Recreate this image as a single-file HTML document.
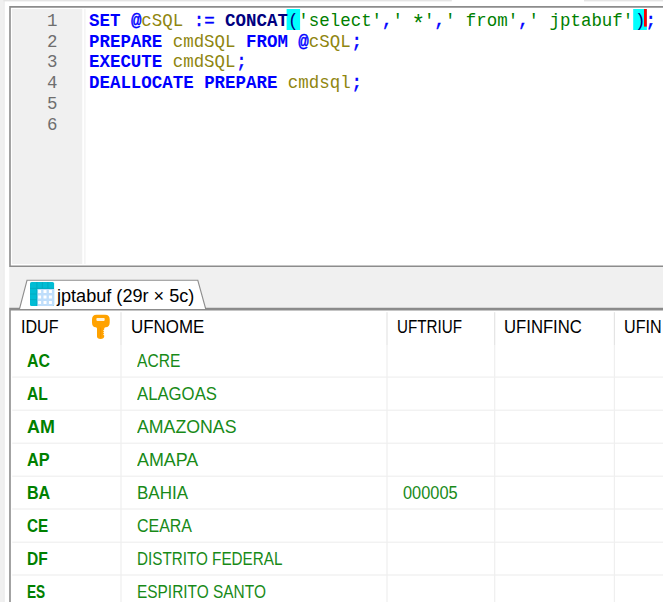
<!DOCTYPE html>
<html>
<head>
<meta charset="utf-8">
<style>
html,body{margin:0;padding:0;}
body{width:663px;height:602px;overflow:hidden;background:#fff;position:relative;font-family:"Liberation Sans",sans-serif;}
.abs{position:absolute;}
.ln{position:absolute;left:11px;width:46.5px;text-align:right;font-family:"Liberation Mono",monospace;font-size:17.45px;line-height:21px;height:21px;color:#6e6e6e;white-space:pre;transform:scaleY(1.08);transform-origin:0 15.16px;}
.cl{position:absolute;left:89px;font-family:"Liberation Mono",monospace;font-size:17.45px;line-height:21px;height:21px;white-space:pre;color:#000;transform:scaleY(1.08);transform-origin:0 15.16px;}
.k{color:#0000ff;font-weight:bold;}
.f{color:#000080;font-weight:bold;}
.i{color:#8f8610;}
.s{color:#008000;}
.y{color:#0000ff;-webkit-text-stroke:0.4px #0000ff;}
.br{color:#000080;}
.n1{position:relative;left:0.8px;}
.as{display:inline-block;transform:translateY(4px) scale(1.3);}
.n2{position:relative;left:1.8px;}
.t{position:absolute;font-size:18.5px;line-height:22px;height:22px;white-space:pre;transform-origin:0 50%;}
.h{color:#000;}
.c1{font-weight:bold;color:#008000;}
.c2{color:#188a18;}
</style>
</head>
<body>
<svg class="abs" style="left:0;top:0" width="663" height="602" viewBox="0 0 663 602">
<rect x="0" y="0" width="3.4" height="602" fill="#f0f0f0"/>
<rect x="3.4" y="0" width="1.2" height="602" fill="#e6e6e6"/>
<rect x="3.4" y="0" width="448.4" height="1.4" fill="#e4e4e4"/>
<rect x="584" y="0" width="79" height="1.4" fill="#e4e4e4"/>
<rect x="12" y="9" width="70.3" height="255" fill="#f0f0f0"/>
<rect x="84" y="9" width="1.7" height="255" fill="#f5f5f5"/>
<path d="M10 267 V6.9 H663 M9.2 266.2 H663" fill="none" stroke="#8c8c8c" stroke-width="1.6"/>
<rect x="286.6" y="9" width="13.5" height="21" fill="#00ffff"/>
<rect x="633.2" y="9" width="13.7" height="21" fill="#00ffff"/>
<rect x="644" y="9" width="2.8" height="17.6" fill="#ff0000"/>
<rect x="9.2" y="267" width="654" height="41" fill="#f0f0f0"/>
<path d="M19.8 309 L27.2 280.3 L197.6 280.3 L205.4 309 Z" fill="#fff"/>
<path d="M19.6 308.5 L27 280.3 L197.8 280.3 L205.6 308.5" fill="none" stroke="#8e8e8e" stroke-width="1.1"/>
<path d="M9.2 308.4 H20 M205 308.4 H663" fill="none" stroke="#8a8a8a" stroke-width="1.2"/>
<path d="M10 602 V309.7 H663" fill="none" stroke="#8c8c8c" stroke-width="1.6"/>
<rect x="30" y="282" width="24.1" height="24" rx="1.6" fill="#00bcd4"/>
<path d="M36.9 282 V306 M42.4 282 V288.6 M47.9 282 V288.6 M30 288.4 H54 M30 294 H37 M30 299.6 H37" stroke="#00a9c0" stroke-width="0.9" fill="none"/>
<path d="M37.4 288.9 H54.1 V304.4 Q54.1 306 52.5 306 H37.4 Z" fill="#bfdefb"/>
<rect x="38.1" y="290.0" width="3" height="3" fill="#fff"/>
<rect x="38.1" y="295.5" width="3" height="3" fill="#fff"/>
<rect x="38.1" y="301.0" width="3" height="3" fill="#fff"/>
<rect x="43.5" y="290.0" width="3" height="3" fill="#fff"/>
<rect x="43.5" y="295.5" width="3" height="3" fill="#fff"/>
<rect x="43.5" y="301.0" width="3" height="3" fill="#fff"/>
<rect x="48.9" y="290.0" width="3" height="3" fill="#fff"/>
<rect x="48.9" y="295.5" width="3" height="3" fill="#fff"/>
<rect x="48.9" y="301.0" width="3" height="3" fill="#fff"/>
<path d="M92 319.5 Q92 314.8 96.5 314.8 H105.2 Q109.7 314.8 109.7 319.5 V322.5 Q109.7 327 105.5 327.3 Q104.2 327.4 104.2 328.6 V329.6 l-1.1 0.9 l1.1 1 l-1.1 1 l1.1 1 l-1.1 1 l1.1 1 V336.6 Q104 339 100.6 339 Q97 339 97 336.6 V328.6 Q97 327.4 95.8 327.3 Q92 327 92 322.5 Z" fill="#ffa200"/>
<rect x="96.4" y="318" width="8.3" height="2.9" rx="0.8" fill="#fff3dc"/>
<rect x="100" y="327.5" width="1.2" height="10" fill="#f59600"/>
<rect x="120.4" y="312.2" width="1.2" height="32.8" fill="#e4e4e4"/>
<rect x="120.4" y="345" width="1.2" height="257" fill="#efefef"/>
<rect x="386.4" y="312.2" width="1.2" height="32.8" fill="#e4e4e4"/>
<rect x="386.4" y="345" width="1.2" height="257" fill="#efefef"/>
<rect x="494.1" y="312.2" width="1.2" height="32.8" fill="#e4e4e4"/>
<rect x="494.1" y="345" width="1.2" height="257" fill="#efefef"/>
<rect x="613.8" y="312.2" width="1.2" height="32.8" fill="#e4e4e4"/>
<rect x="613.8" y="345" width="1.2" height="257" fill="#efefef"/>
<rect x="12.2" y="376.5" width="653" height="1.2" fill="#efefef"/>
<rect x="12.2" y="409.6" width="653" height="1.2" fill="#efefef"/>
<rect x="12.2" y="442.6" width="653" height="1.2" fill="#efefef"/>
<rect x="12.2" y="475.6" width="653" height="1.2" fill="#efefef"/>
<rect x="12.2" y="508.4" width="653" height="1.2" fill="#efefef"/>
<rect x="12.2" y="541.6" width="653" height="1.2" fill="#efefef"/>
<rect x="12.2" y="574.4" width="653" height="1.2" fill="#efefef"/>
</svg>
<div class="ln" style="top:10.6px">1</div>
<div class="ln" style="top:31.5px">2</div>
<div class="ln" style="top:52.4px">3</div>
<div class="ln" style="top:73.3px">4</div>
<div class="ln" style="top:94.2px">5</div>
<div class="ln" style="top:115.1px">6</div>
<div class="cl" style="top:10.6px"><span class="k">SET</span> <span class="y">@</span><span class="i">cSQL</span> <span class="y">:=</span> <span class="f">CONCAT</span><span class="br">(</span><span class="s">'select'</span><span class="y">,</span><span class="s">' <span class="as">*</span>'</span><span class="y">,</span><span class="s">' from'</span><span class="y">,</span><span class="s">' jptabuf'</span><span class="br n2">)</span><span class="y n2">;</span></div>
<div class="cl" style="top:31.5px"><span class="k">PREPARE</span> <span class="i">cmdSQL</span> <span class="k">FROM</span> <span class="y">@</span><span class="i">cSQL</span><span class="y n1">;</span></div>
<div class="cl" style="top:52.4px"><span class="k">EXECUTE</span> <span class="i">cmdSQL</span><span class="y n1">;</span></div>
<div class="cl" style="top:73.3px"><span class="k">DEALLOCATE</span> <span class="k">PREPARE</span> <span class="i">cmdsql</span><span class="y n1">;</span></div>
<div class="t h" style="left:57.0px;top:284.8px;transform:scaleX(0.958);font-size:18.9px;">jptabuf (29r × 5c)</div>
<div class="t h" style="left:21.3px;top:315.6px;transform:scaleX(0.869);">IDUF</div>
<div class="t h" style="left:130.5px;top:315.6px;transform:scaleX(0.915);">UFNOME</div>
<div class="t h" style="left:397.3px;top:315.6px;transform:scaleX(0.821);">UFTRIUF</div>
<div class="t h" style="left:504.1px;top:315.6px;transform:scaleX(0.902);">UFINFINC</div>
<div class="t h" style="left:624.0px;top:315.6px;transform:scaleX(0.872);">UFIN</div>
<div class="t c1" style="left:26.6px;top:349.9px;transform:scaleX(0.859);">AC</div><div class="t c2" style="left:136.5px;top:349.9px;transform:scaleX(0.843);">ACRE</div>
<div class="t c1" style="left:26.5px;top:382.9px;transform:scaleX(0.845);">AL</div><div class="t c2" style="left:136.5px;top:382.9px;transform:scaleX(0.904);">ALAGOAS</div>
<div class="t c1" style="left:26.5px;top:415.9px;transform:scaleX(0.966);">AM</div><div class="t c2" style="left:136.5px;top:415.9px;transform:scaleX(0.958);">AMAZONAS</div>
<div class="t c1" style="left:26.5px;top:448.9px;transform:scaleX(0.881);">AP</div><div class="t c2" style="left:136.5px;top:448.9px;transform:scaleX(0.967);">AMAPA</div>
<div class="t c1" style="left:27.0px;top:481.9px;transform:scaleX(0.870);">BA</div><div class="t c2" style="left:136.8px;top:481.9px;transform:scaleX(0.920);">BAHIA</div>
<div class="t c2" style="left:402.5px;top:481.9px;transform:scaleX(0.885);">000005</div>
<div class="t c1" style="left:27.0px;top:514.9px;transform:scaleX(0.827);">CE</div><div class="t c2" style="left:136.8px;top:514.9px;transform:scaleX(0.863);">CEARA</div>
<div class="t c1" style="left:27.0px;top:547.9px;transform:scaleX(0.841);">DF</div><div class="t c2" style="left:136.8px;top:547.9px;transform:scaleX(0.824);">DISTRITO FEDERAL</div>
<div class="t c1" style="left:26.9px;top:580.9px;transform:scaleX(0.738);">ES</div><div class="t c2" style="left:136.8px;top:580.9px;transform:scaleX(0.834);">ESPIRITO SANTO</div>
</body>
</html>
